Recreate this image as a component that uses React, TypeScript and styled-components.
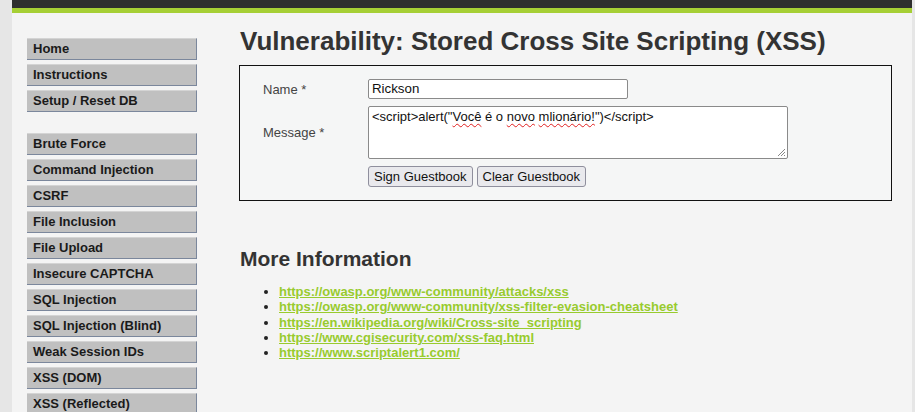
import React from "react";
import styled, { createGlobalStyle } from "styled-components";

const Global = createGlobalStyle`
  html, body { margin: 0; padding: 0; }
  body {
    background: #e6e6e6;
    font-family: "Liberation Sans", Arial, sans-serif;
    color: #333;
    overflow: hidden;
  }
`;

const Container = styled.div`
  margin-left: 12px;
  width: 900px;
  min-height: 412px;
  background: #f4f4f4;
`;

const Header = styled.div`
  height: 8px;
  background: #2e2e2e;
  border-bottom: 5px solid #a6cf35;
`;

const Body = styled.div`
  display: flex;
  align-items: flex-start;
`;

const Menu = styled.nav`
  width: 170px;
  padding: 25px 0 0 15px;
  display: flex;
  flex-direction: column;
`;

const MenuGroup = styled.ul`
  list-style: none;
  margin: 0 0 21px;
  padding: 0;
  display: flex;
  flex-direction: column;
  gap: 4px;
`;

const MenuItem = styled.li`
  background: #c0c0c0;
  border-right: 1px solid #7b879c;
  border-bottom: 1px solid #7b879c;
  border-top: 1px solid #d4d4d4;
  box-sizing: border-box;
  height: 22px;
  padding-left: 6px;
  font-weight: bold;
  font-size: 13px;
  line-height: 20px;
  color: #1a1a1a;
`;

const Main = styled.main`
  flex: 1;
  padding: 0 20px 0 42px;
`;

const Title = styled.h1`
  margin: 13px 0 0 1px;
  font-size: 26px;
  line-height: 30px;
  font-weight: bold;
  color: #333;
`;

const CodeArea = styled.div`
  margin-top: 9px;
  border: 1px solid #111;
  background: #f5f6f6;
  padding: 13px 20px 13px 23px;
`;

const FormGrid = styled.div`
  display: grid;
  grid-template-columns: 105px auto;
  row-gap: 7px;
  align-items: center;
  justify-items: start;
  font-size: 13px;
  color: #444;
`;

const Label = styled.span`
  font-size: 13px;
  color: #444;
`;

const Input = styled.div`
  box-sizing: border-box;
  width: 260px;
  height: 20px;
  background: #fff;
  border: 1px solid #8a8a8a;
  border-radius: 2px;
  padding: 0 3px;
  font-size: 13.3px;
  line-height: 18px;
  color: #111;
`;

const TextArea = styled.div`
  position: relative;
  box-sizing: border-box;
  width: 420px;
  height: 53px;
  background: #fff;
  border: 1px solid #8a8a8a;
  border-radius: 2px;
  padding: 2px 3px;
  font-size: 13px;
  line-height: 16px;
  color: #111;
`;

const Misspelled = styled.span`
  text-decoration: underline wavy #e02020;
  text-decoration-thickness: 1px;
  text-underline-offset: 2px;
`;

const Grip = styled.svg`
  position: absolute;
  right: 1px;
  bottom: 1px;
`;

const Buttons = styled.div`
  display: flex;
  gap: 4px;
`;

const Button = styled.button`
  font-family: "Liberation Sans", Arial, sans-serif;
  font-size: 13px;
  height: 21px;
  padding: 0 5px;
  background: #e9e9ed;
  border: 1px solid #8f8f9d;
  border-radius: 3px;
  color: #111;
`;

const H2 = styled.h2`
  margin: 45px 0 0 1px;
  font-size: 21px;
  line-height: 26px;
  font-weight: bold;
  color: #333;
`;

const Links = styled.ul`
  margin: 12px 0 0;
  padding-left: 40px;
  font-size: 13px;
  line-height: 15.3px;
`;

const LinkItem = styled.li`
  color: #222;
`;

const Link = styled.a`
  color: #98cb2e;
  font-weight: bold;
  text-decoration: underline;
`;

const groups = [
  ["Home", "Instructions", "Setup / Reset DB"],
  [
    "Brute Force",
    "Command Injection",
    "CSRF",
    "File Inclusion",
    "File Upload",
    "Insecure CAPTCHA",
    "SQL Injection",
    "SQL Injection (Blind)",
    "Weak Session IDs",
    "XSS (DOM)",
    "XSS (Reflected)",
  ],
];

const links = [
  "https://owasp.org/www-community/attacks/xss",
  "https://owasp.org/www-community/xss-filter-evasion-cheatsheet",
  "https://en.wikipedia.org/wiki/Cross-site_scripting",
  "https://www.cgisecurity.com/xss-faq.html",
  "https://www.scriptalert1.com/",
];

export default function App() {
  return (
    <>
      <Global />
      <Container>
        <Header />
        <Body>
          <Menu>
            {groups.map((g, i) => (
              <MenuGroup key={i}>
                {g.map((t) => (
                  <MenuItem key={t}>{t}</MenuItem>
                ))}
              </MenuGroup>
            ))}
          </Menu>
          <Main>
            <Title>Vulnerability: Stored Cross Site Scripting (XSS)</Title>
            <CodeArea>
              <FormGrid>
                <Label>Name *</Label>
                <Input>Rickson</Input>
                <Label>Message *</Label>
                <TextArea>
                  &lt;script&gt;alert("<Misspelled>Você</Misspelled> é o{" "}
                  <Misspelled>novo</Misspelled>{" "}
                  <Misspelled>mlionário!</Misspelled>")&lt;/script&gt;
                  <Grip width="10" height="10" viewBox="0 0 10 10">
                    <path d="M9 2 L2 9 M9 5 L5 9 M9 8 L8 9" stroke="#888" strokeWidth="1" />
                  </Grip>
                </TextArea>
                <span />
                <Buttons>
                  <Button>Sign Guestbook</Button>
                  <Button>Clear Guestbook</Button>
                </Buttons>
              </FormGrid>
            </CodeArea>
            <H2>More Information</H2>
            <Links>
              {links.map((l) => (
                <LinkItem key={l}>
                  <Link href="#">{l}</Link>
                </LinkItem>
              ))}
            </Links>
          </Main>
        </Body>
      </Container>
    </>
  );
}
